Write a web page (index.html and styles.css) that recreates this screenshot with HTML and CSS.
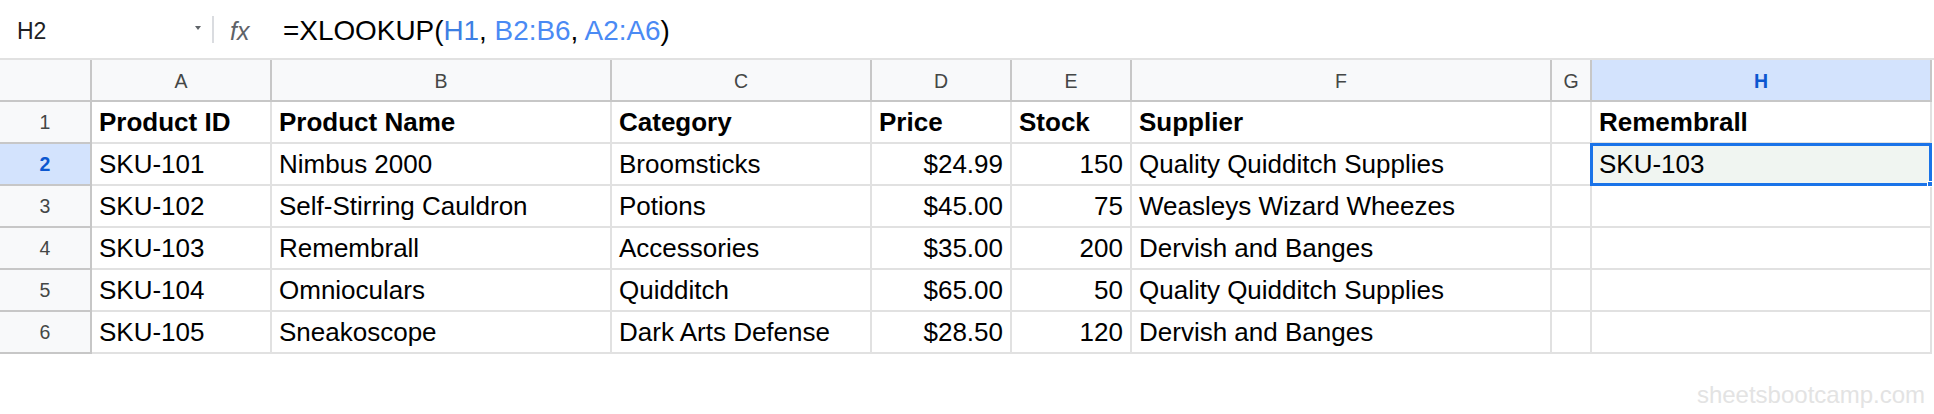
FILE: index.html
```html
<!DOCTYPE html>
<html lang="en">
<head>
<meta charset="utf-8">
<title>XLOOKUP</title>
<link rel="stylesheet" href="styles.css">
</head>
<body>
<div class="fbar">
  <div class="namebox">
    <span class="nb-text">H2</span>
    <svg class="nb-arrow" width="6" height="4" viewBox="0 0 6 4"><path d="M0 0H6L3 4Z" fill="#5f6368"/></svg>
  </div>
  <div class="fsep"></div>
  <div class="fx">fx</div>
  <div class="formula">=XLOOKUP(<span class="r1">H1</span>, <span class="r2">B2:B6</span>, <span class="r2">A2:A6</span>)</div>
</div>
<div class="sheet">
  <div class="corner"></div>
  <div class="ch">A</div>
  <div class="ch">B</div>
  <div class="ch">C</div>
  <div class="ch">D</div>
  <div class="ch">E</div>
  <div class="ch">F</div>
  <div class="ch">G</div>
  <div class="ch ch-sel">H</div>

  <div class="rh">1</div>
  <div class="c b">Product ID</div>
  <div class="c b">Product Name</div>
  <div class="c b">Category</div>
  <div class="c b">Price</div>
  <div class="c b">Stock</div>
  <div class="c b">Supplier</div>
  <div class="c"></div>
  <div class="c b">Remembrall</div>

  <div class="rh rh-sel">2</div>
  <div class="c">SKU-101</div>
  <div class="c">Nimbus 2000</div>
  <div class="c">Broomsticks</div>
  <div class="c n">$24.99</div>
  <div class="c n">150</div>
  <div class="c">Quality Quidditch Supplies</div>
  <div class="c"></div>
  <div class="c active">SKU-103<div class="selbox"><div class="handle"></div></div></div>

  <div class="rh">3</div>
  <div class="c">SKU-102</div>
  <div class="c">Self-Stirring Cauldron</div>
  <div class="c">Potions</div>
  <div class="c n">$45.00</div>
  <div class="c n">75</div>
  <div class="c">Weasleys Wizard Wheezes</div>
  <div class="c"></div>
  <div class="c"></div>

  <div class="rh">4</div>
  <div class="c">SKU-103</div>
  <div class="c">Remembrall</div>
  <div class="c">Accessories</div>
  <div class="c n">$35.00</div>
  <div class="c n">200</div>
  <div class="c">Dervish and Banges</div>
  <div class="c"></div>
  <div class="c"></div>

  <div class="rh">5</div>
  <div class="c">SKU-104</div>
  <div class="c">Omnioculars</div>
  <div class="c">Quidditch</div>
  <div class="c n">$65.00</div>
  <div class="c n">50</div>
  <div class="c">Quality Quidditch Supplies</div>
  <div class="c"></div>
  <div class="c"></div>

  <div class="rh">6</div>
  <div class="c">SKU-105</div>
  <div class="c">Sneakoscope</div>
  <div class="c">Dark Arts Defense</div>
  <div class="c n">$28.50</div>
  <div class="c n">120</div>
  <div class="c">Dervish and Banges</div>
  <div class="c"></div>
  <div class="c"></div>
</div>
<div class="footer"><span class="wm">sheetsbootcamp.com</span></div>
</body>
</html>
```
FILE: styles.css
```css
* { box-sizing: border-box; }
html, body { margin: 0; padding: 0; background: #fff; }
body {
  width: 1934px;
  height: 414px;
  overflow: hidden;
  font-family: "Liberation Sans", Arial, sans-serif;
  color: #000;
}
.fbar {
  height: 60px;
  border-bottom: 2px solid #e1e1e1;
  display: flex;
  align-items: center;
  padding-top: 4px;
}
.namebox {
  width: 206px;
  padding-left: 17px;
  padding-right: 5px;
  display: flex;
  align-items: center;
  justify-content: space-between;
}
.nb-text { font-size: 23px; color: #202124; }
.nb-arrow { margin-top: -6px; }
.fsep {
  width: 2px;
  height: 27px;
  background: #dadce0;
  margin-left: 6px;
  margin-top: -4px;
}
.fx {
  margin-left: 16px;
  width: 53px;
  font-size: 25px;
  font-style: italic;
  color: #5f6368;
}
.formula { font-size: 27.9px; color: #000; white-space: nowrap; }
.r1 { color: #3d7fe3; }
.r2 { color: #4a8af4; }

.sheet {
  display: grid;
  grid-template-columns: 92px 180px 340px 260px 140px 120px 420px 40px 340px;
  grid-auto-rows: 42px;
}
.corner, .ch, .rh {
  background: #f8f9fa;
  border-right: 2px solid #c7c7c7;
  border-bottom: 2px solid #c7c7c7;
  color: #444746;
  font-size: 19.5px;
  display: flex;
  align-items: center;
  justify-content: center;
}
.ch { padding-top: 3px; }
.ch-sel, .rh-sel {
  background: #d3e3fd;
  color: #0b57d0;
  font-weight: bold;
}
.c {
  border-right: 2px solid #e1e1e1;
  border-bottom: 2px solid #e1e1e1;
  font-size: 26px;
  line-height: 29px;
  padding: 0 7px;
  display: flex;
  align-items: center;
  white-space: nowrap;
  overflow: visible;
}
.b { font-weight: bold; }
.n { justify-content: flex-end; }
.active {
  position: relative;
  background: #f0f5f1;
}
.selbox {
  position: absolute;
  left: -2px;
  top: -1px;
  width: 342px;
  height: 43px;
  border: 3px solid #1a73e8;
}
.handle {
  position: absolute;
  right: -4px;
  bottom: -4px;
  width: 6px;
  height: 6px;
  background: #1a73e8;
  border: 1px solid #fff;
}
.footer {
  display: flex;
  justify-content: flex-end;
  padding-right: 9px;
  margin-top: 27px;
}
.wm {
  font-size: 24px;
  color: #e3e3e3;
}
```
